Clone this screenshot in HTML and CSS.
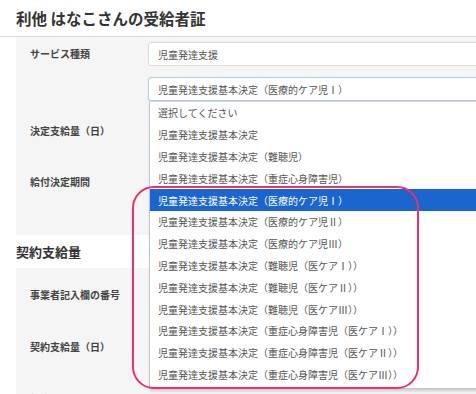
FILE: index.html
```html
<!DOCTYPE html>
<html lang="ja">
<head>
<meta charset="utf-8">
<link rel="stylesheet" href="styles.css">
</head>
<body>
<div class="page">
  <header class="header"><h1 class="title">利他 はなこさんの受給者証</h1></header>
  <main class="main">
    <div class="form">
      <div class="label label-top">サービス種類</div>
      <div class="value value-stack">
        <div class="input">児童発達支援</div>
        <div class="input select-focus">児童発達支援基本決定（医療的ケア児Ⅰ）</div>
      </div>
      <div class="label row-b">決定支給量（日）</div>
      <div class="value"></div>
      <div class="label label-top row-c">給付決定期間</div>
      <div class="value"></div>
    </div>
    <h2 class="section">契約支給量</h2>
    <div class="form">
      <div class="label row-d">事業者記入欄の番号</div>
      <div class="value"></div>
      <div class="label row-d">契約支給量（日）</div>
      <div class="value"></div>
      <div class="label row-d">契約日</div>
      <div class="value value-text">令和元年10月1日</div>
    </div>
  </main>

  <ul class="dropdown">
    <li class="opt">選択してください</li>
    <li class="opt">児童発達支援基本決定</li>
    <li class="opt">児童発達支援基本決定（難聴児）</li>
    <li class="opt">児童発達支援基本決定（重症心身障害児）</li>
    <li class="opt selected">児童発達支援基本決定（医療的ケア児Ⅰ）</li>
    <li class="opt">児童発達支援基本決定（医療的ケア児Ⅱ）</li>
    <li class="opt">児童発達支援基本決定（医療的ケア児Ⅲ）</li>
    <li class="opt">児童発達支援基本決定（難聴児（医ケアⅠ））</li>
    <li class="opt">児童発達支援基本決定（難聴児（医ケアⅡ））</li>
    <li class="opt">児童発達支援基本決定（難聴児（医ケアⅢ））</li>
    <li class="opt">児童発達支援基本決定（重症心身障害児（医ケアⅠ））</li>
    <li class="opt">児童発達支援基本決定（重症心身障害児（医ケアⅡ））</li>
    <li class="opt">児童発達支援基本決定（重症心身障害児（医ケアⅢ））</li>
  </ul>
  <div class="highlight-ring"></div>
</div>
</body>
</html>
```

FILE: styles.css
```css
* { box-sizing: border-box; }
html, body {
  margin: 0;
  padding: 0;
  background: #fff;
  overflow: hidden;
  width: 476px;
  height: 394px;
}
body {
  font-family: "Noto Sans CJK JP", "Noto Sans", sans-serif;
  color: #444;
}
.page {
  position: relative;
  width: 476px;
  height: 394px;
  overflow: hidden;
}
.header {
  height: 37px;
  border-bottom: 1px solid #d9d9d9;
  padding: 0 0 1px 16px;
  display: flex;
  align-items: center;
}
.title {
  margin: 0;
  font-size: 15.5px;
  font-weight: bold;
  color: #333;
}
.main {
  padding-left: 16px;
}
.form {
  display: grid;
  grid-template-columns: 132px 1fr;
  background: #f5f5f5;
  width: 520px;
}
.label {
  font-size: 10px;
  font-weight: bold;
  color: #444;
  padding-left: 14px;
  display: flex;
  align-items: center;
}
.label-top {
  align-items: flex-start;
  padding-top: 9px;
}
.value-stack {
  padding: 5px 0 4px 0;
  display: flex;
  flex-direction: column;
  gap: 11px;
}
.input {
  height: 24px;
  background: #fff;
  border: 1px solid #dcdcdc;
  border-radius: 3px;
  font-size: 10px;
  color: #555;
  padding-left: 9px;
  display: flex;
  align-items: center;
}
.select-focus {
  border-color: #b3ccd8;
  box-shadow: 0 1px 1px rgba(120, 160, 180, 0.35);
}
.row-b { height: 50px; }
.row-c { height: 80px; padding-top: 19px; }
.row-d { height: 52px; }
.value-text {
  font-size: 10px;
  color: #555;
  padding-left: 12px;
  display: flex;
  align-items: center;
}
.section {
  margin: 0;
  height: 33px;
  font-size: 13px;
  font-weight: bold;
  color: #333;
  display: flex;
  align-items: center;
}
.dropdown {
  position: absolute;
  left: 149px;
  top: 102px;
  width: 340px;
  margin: 0;
  padding: 0 0 3px 0;
  list-style: none;
  background: #fff;
  border: 1px solid #c4c4c4;
  border-top: none;
  box-shadow: 1px 2px 3px rgba(0, 0, 0, 0.18);
}
.opt {
  height: 21.8px;
  font-size: 10px;
  color: #555;
  padding-left: 8px;
  display: flex;
  align-items: center;
  white-space: nowrap;
}
.selected {
  background: #1b65cf;
  color: #fff;
}
.highlight-ring {
  position: absolute;
  left: 132px;
  top: 186px;
  width: 287px;
  height: 203px;
  border: 2.5px solid #ef2f6c;
  border-radius: 22px;
  pointer-events: none;
}
```
